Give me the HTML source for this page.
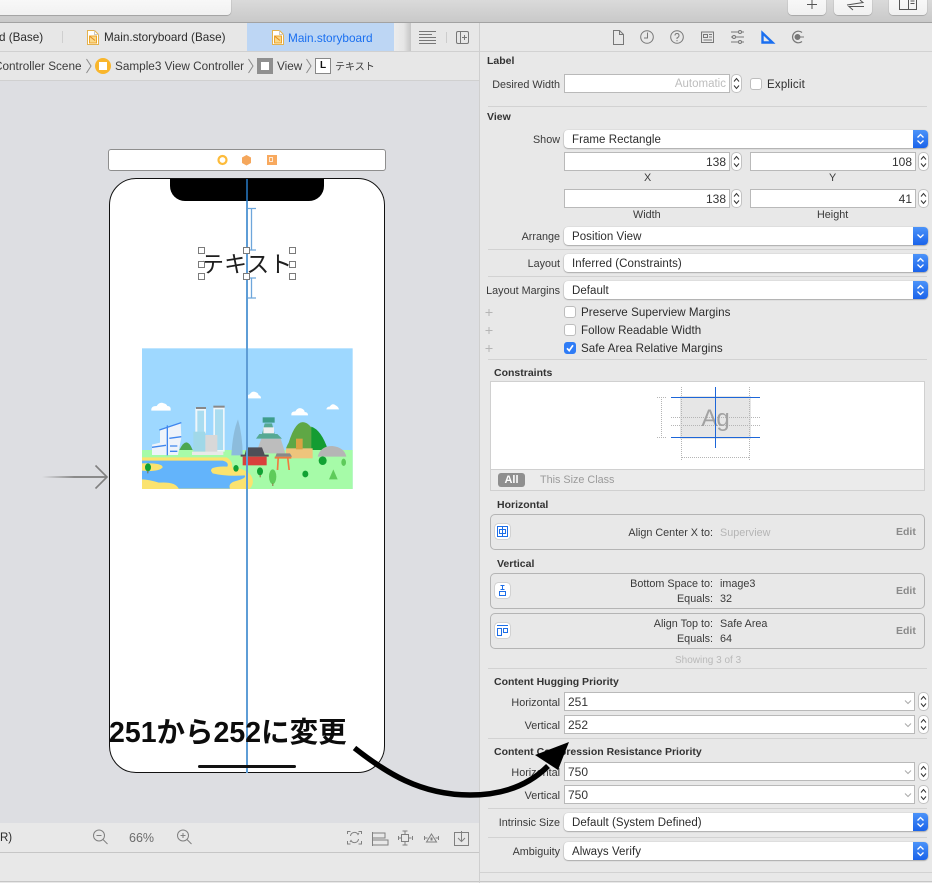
<!DOCTYPE html>
<html><head><meta charset="utf-8">
<style>
html,body{margin:0;padding:0}
body{width:932px;height:883px;overflow:hidden;position:relative;background:#e8e8e8;font-family:"Liberation Sans","Noto Sans CJK JP",sans-serif;font-size:10.8px;color:#2c2c2c;letter-spacing:0}
div,svg{position:absolute}
.t{position:absolute;white-space:nowrap;line-height:14px;height:14px;margin-top:1px}
.l{position:absolute;white-space:nowrap;line-height:14px;height:14px;right:372px;color:#3a3a3a;margin-top:1px}
.b{font-weight:bold;color:#333;font-size:10.5px}
.s{position:absolute;left:488px;width:439px;height:1px;background:#d2d2d2}
.f{box-sizing:border-box;background:#fff;border:1px solid #b9b9b9;line-height:18px;white-space:nowrap;color:#333}
.n{text-align:right;padding-right:3px;font-size:12px}
.c{padding-left:3px;font-size:12px}
.p{left:564px;width:364px;height:18px;background:#fff;border-radius:4px;box-shadow:0 .5px 1.5px rgba(0,0,0,.45);line-height:20px;font-size:11.5px;letter-spacing:.05px;padding-left:8px;box-sizing:border-box;white-space:nowrap;color:#2c2c2c}
.p i{position:absolute;right:0;top:0;width:15px;height:18px;background:linear-gradient(#4b93f9,#1a63ea);border-radius:0 4px 4px 0}
.k{box-sizing:border-box;width:12px;height:12px;background:#fff;border:1px solid #bdbdbd;border-radius:3px}
.h{box-sizing:border-box;width:7px;height:7px;background:#fff;border:1.3px solid #7b7b7b}
.x{box-sizing:border-box;left:490px;width:435px;border:1px solid #b4b4b4;border-radius:5px;background:#e8e8e8}
.ib{box-sizing:border-box;left:495px;width:15px;height:15px;background:#fff;border-radius:3px;box-shadow:0 0 1px rgba(0,0,0,.6)}
.cb{font-size:11.6px;letter-spacing:.05px}
</style></head><body>
<svg width="0" height="0" style="position:absolute"><defs>
<symbol id="st" viewBox="0 0 11 19"><rect x=".5" y=".5" width="10" height="18" rx="4.5" fill="#fff" stroke="#c2c2c2"/><path d="M3 7.500l2.500-3 2.500 3M3 11.500l2.500 3 2.500-3" fill="none" stroke="#333" stroke-width="1"/></symbol>
<symbol id="ud" viewBox="0 0 15 18"><path d="M4.500 7.500L7.500 4.500l3 3M4.500 10.500l3 3 3-3" fill="none" stroke="#fff" stroke-width="1.300"/></symbol>
<symbol id="dc" viewBox="0 0 12 15"><path d="M.5.5h7l4 4v10H.5z" fill="#fff" stroke="#e3b24e"/><path d="M7.500.5v4h4" fill="none" stroke="#c9c9c9"/><rect x="2.500" y="6" width="7" height="7" fill="#f9d98a" stroke="#eda428"/><path d="M3 6.500l5 4" stroke="#e68a1e"/></symbol>
</defs></svg>

<!-- top toolbar -->
<div style="left:0;top:0;width:932px;height:22px;background:linear-gradient(#dadada,#c9c9c9)"></div>
<div style="left:0;top:22px;width:932px;height:1px;background:#a2a2a2"></div>
<div style="left:-5px;top:-5px;width:236px;height:20px;background:linear-gradient(#fafafa,#f1f1f1);border-radius:4px;box-shadow:0 .5px 1px rgba(0,0,0,.4)"></div>
<div style="left:788px;top:-5px;width:38px;height:20px;background:linear-gradient(#fafafa,#f0f0f0);border-radius:4px;box-shadow:0 .5px 1px rgba(0,0,0,.35)"></div>
<div style="left:834px;top:-5px;width:38px;height:20px;background:linear-gradient(#fafafa,#f0f0f0);border-radius:4px;box-shadow:0 .5px 1px rgba(0,0,0,.35)"></div>
<div style="left:889px;top:-5px;width:38px;height:20px;background:linear-gradient(#fafafa,#f0f0f0);border-radius:4px;box-shadow:0 .5px 1px rgba(0,0,0,.35)"></div>
<svg style="left:780px;top:0" width="152" height="15" fill="none" stroke="#555" stroke-width="1">
<path d="M27 4.500h10M32 0v9"/>
<path d="M67 5l16-2.500-3-2.500M84 6.500H69l4 3.500"/>
<path d="M119.500-1v10.500h17V-1M128.500-1v10.500M130.500 1h4M130.500 3.500h4"/>
</svg>

<!-- tabs -->
<div style="left:0;top:23px;width:479px;height:28px;background:#e7e7e7"></div>
<div style="left:247px;top:23px;width:147px;height:28px;background:#bdd6f4"></div>
<div style="left:394px;top:23px;width:16px;height:28px;background:linear-gradient(90deg,#ececec 0,#e6e6e6 60%,#c9c9c9 100%)"></div>
<div style="left:410px;top:23px;width:1px;height:28px;background:#c8c8c8"></div>
<div style="left:62px;top:31px;width:1px;height:12px;background:#cfcfcf"></div>
<span class="t" style="left:-1px;top:30px;font-size:11.700px">d (Base)</span>
<svg style="left:87px;top:30px" width="12" height="15"><use href="#dc"/></svg>
<span class="t" style="left:104px;top:30px;font-size:11.700px">Main.storyboard (Base)</span>
<svg style="left:272px;top:30px" width="12" height="15"><use href="#dc"/></svg>
<span class="t" style="left:288px;top:30px;font-size:11.800px;color:#1a6ff0">Main.storyboard</span>
<svg style="left:415px;top:28px" width="60" height="20" fill="none" stroke="#777">
<path d="M4 3.500h17M4 6.500h13M4 9.500h17M4 12.500h17M4 15.500h17" stroke-width=".9"/>
<path d="M31.500 4v11" stroke="#ccc"/>
<rect x="41.500" y="3.500" width="12" height="12" rx="1.500"/><path d="M45.500 3.500v12M47 9.500h5M49.500 7v5"/>
</svg>
<div style="left:0;top:51px;width:479px;height:1px;background:#d0d0d0"></div>

<!-- breadcrumb -->
<div style="left:0;top:52px;width:479px;height:28px;background:#e7e7e7"></div>
<div style="left:0;top:80px;width:479px;height:1px;background:#d0d0d0"></div>
<span class="t" style="left:-6px;top:59px;font-size:11.750px;color:#3c3c3c">Controller Scene</span>
<svg style="left:85px;top:58px" width="232" height="16" fill="none" stroke="#8a8a8a"><path d="M1.500 1l4.500 7-4.500 7M163.500 1l4.500 7-4.500 7M221.500 1l4.500 7-4.500 7"/></svg>
<div style="left:95px;top:58px;width:16px;height:16px;border-radius:50%;background:#f9b62c"></div>
<div style="left:99px;top:62px;width:8px;height:8px;background:#fff"></div>
<span class="t" style="left:115px;top:59px;font-size:11.750px;color:#3c3c3c">Sample3 View Controller</span>
<div style="left:257px;top:58px;width:16px;height:16px;background:#8f8f8f"></div>
<div style="left:261px;top:62px;width:8px;height:8px;background:#fff"></div>
<span class="t" style="left:277px;top:59px;font-size:11.750px;color:#3c3c3c">View</span>
<div style="left:315px;top:58px;width:16px;height:16px;box-sizing:border-box;border:1px solid #888;background:#fff;text-align:center;font:bold 10px/14px 'Liberation Sans',sans-serif;color:#111">L</div>
<span class="t" style="left:335px;top:60px;font-size:10px;color:#3c3c3c">テキスト</span>

<!-- canvas -->
<div style="left:0;top:81px;width:479px;height:742px;background:#dddee2"></div>
<div style="left:108px;top:149px;width:278px;height:22px;box-sizing:border-box;background:#fff;border:1px solid #8e8e8e;border-radius:3px"></div>
<svg style="left:215px;top:153px" width="65" height="15">
<circle cx="7.500" cy="7" r="4" fill="#fff" stroke="#fdbb3a" stroke-width="2.200"/>
<path d="M31.500 2l4.500 2.500v5.500l-4.500 2.500-4.500-2.500V4.500z" fill="#f5a75c"/>
<rect x="52" y="2" width="10" height="10" fill="#f8a95e"/><path d="M54.500 4.500h3v4h-3z" fill="none" stroke="#fff" stroke-width=".7"/>
</svg>
<div style="left:109px;top:178px;width:276px;height:595px;box-sizing:border-box;background:#fff;border:1px solid #111;border-radius:27px"></div>
<div style="left:170px;top:179px;width:154px;height:22px;background:#000;border-radius:0 0 15px 15px"></div>
<svg style="left:40px;top:460px" width="72" height="34" fill="none"><defs><linearGradient id="g"><stop offset="0" stop-color="#8a8a8a" stop-opacity="0"/><stop offset=".5" stop-color="#8a8a8a"/></linearGradient></defs>
<rect x="2" y="16" width="65" height="2" fill="url(#g)"/><path d="M55.500 5.500L67 17 55.500 28.500" stroke="#808080" stroke-width="1.600"/></svg>

<!-- image illustration; coordinates are zoomed 3x from x130,y340 -->
<svg style="left:130px;top:340px" width="235" height="160" viewBox="0 0 705 480">
<rect x="36" y="25" width="632" height="422" fill="#9ed8ff"/>
<path d="M36 330H668V447H36z" fill="#a6fba8"/>
<path d="M36 352H290q20 12 16 30 50 5 60 30 8 20-8 35H36z" fill="#fbe36f"/>
<path d="M36 362H278q20 5 14 18-25-2-44 4-10 6 0 16 40 10 96 6 8 8-30 18-20 6-14 22H146q-10-22-60-18-30-10-50-10v-26q50 4 62-10 0-14-62-12z" fill="#63b4fb"/>
<g fill="#fff"><path d="M64 212q-2-14 16-14 8-14 22-8 8 2 10 8 12 0 10 14z"/><path d="M484 226q-2-12 12-12 8-14 20-8 8 4 8 10 10 0 10 10z"/><path d="M589 208q2-8 10-8 8-12 18-4 8 4 10 12z"/><path d="M351 175q-2-10 8-12 8-12 20-6 8 4 6 8 8 2 8 10z"/></g>
<path d="M66 345V314l24-6v-40l62-20 2 44-10 53z" fill="#eef3fa"/><path d="M88 270l66-22M112 256v90M66 322l42-6M118 295l36-5M120 318h22M120 334h22" stroke="#3f86ee" stroke-width="4" fill="none"/>
<path d="M148 330q22-46 40 0z" fill="#4ca64f"/>
<rect x="196" y="205" width="32" height="75" fill="#eef6fa"/><rect x="250" y="200" width="34" height="135" fill="#eef6fa"/>
<rect x="202" y="212" width="20" height="66" fill="#a9dcf0"/><rect x="255" y="208" width="24" height="122" fill="#a9dcf0"/>
<rect x="190" y="275" width="36" height="60" fill="#a0d8e8"/><rect x="226" y="285" width="36" height="55" fill="#d8d8d8"/>
<rect x="186" y="335" width="94" height="10" fill="#e9e9e9"/><rect x="198" y="201" width="30" height="6" fill="#888"/><rect x="250" y="197" width="34" height="6" fill="#888"/>
<path d="M304 346q4-70 20-108 14 50 14 108z" fill="#8cbcdc"/>
<path d="M470 330q30-120 74-68 30 25 50 68z" fill="#5fa745"/><path d="M544 260q30 10 50 70h-50z" fill="#149c32"/><path d="M468 325q14-38 36-22v22z" fill="#5fa745"/>
<path d="M378 340l16-44h58l14 44z" fill="#bdbdbd"/><path d="M378 296h78l-14-14h-8l-8-32h-22l-8 32h-8z" fill="#56a993"/><rect x="398" y="232" width="36" height="16" fill="#3e9d8b"/><rect x="400" y="262" width="32" height="18" fill="#eee"/>
<rect x="468" y="325" width="80" height="30" fill="#eec47c"/><rect x="498" y="296" width="20" height="32" fill="#d9a243"/>
<path d="M563 350q8-32 44-32 36 4 42 32z" fill="#b5b5b5"/>
<path d="M350 322h46l8 22h12v6H332v-6h12z" fill="#4f4f57"/><rect x="338" y="350" width="72" height="26" fill="#d9403c"/>
<path d="M434 350h50v6h-8l4 34h-5l-4-34h-24l-2 34h-5l2-34h-8z" fill="#f07b3f"/><path d="M440 340h40l6 10h-50z" fill="#888"/>
<g fill="#11a233"><ellipse cx="54" cy="382" rx="9" ry="12"/><ellipse cx="318" cy="385" rx="8" ry="10"/><ellipse cx="390" cy="394" rx="9" ry="12"/><ellipse cx="526" cy="402" rx="9" ry="10"/><ellipse cx="578" cy="362" rx="12" ry="13"/></g>
<g fill="#5ecb5a"><ellipse cx="428" cy="410" rx="11" ry="22"/><ellipse cx="641" cy="367" rx="7" ry="11"/><path d="M610 388l13 30h-26z"/></g>
<g fill="#8a6b3a"><rect x="52" y="392" width="3" height="8"/><rect x="427" y="430" width="3" height="8"/><rect x="389" y="405" width="3" height="7"/></g>
</svg>

<!-- selection guides -->
<div style="left:246px;top:179px;width:1.500px;height:594px;background:#5e9dd6"></div>
<div style="left:246px;top:179px;width:1.500px;height:22px;background:#1e5c94"></div>
<svg style="left:248px;top:206px" width="10" height="95" fill="none" stroke="#6ea6db" stroke-width="1.300"><path d="M0 2.500h8M3.500 2v42M0 44h8M0 72h8M3.500 72v20M0 92h8"/></svg>
<span class="t" style="left:201px;top:248px;font-size:23px;line-height:30px;height:30px;color:#1e1e1e">テキスト</span>
<div class="h" style="left:198px;top:247px"></div><div class="h" style="left:243px;top:247px"></div><div class="h" style="left:289px;top:247px"></div>
<div class="h" style="left:198px;top:261px"></div><div class="h" style="left:289px;top:261px"></div>
<div class="h" style="left:198px;top:273px"></div><div class="h" style="left:243px;top:273px"></div><div class="h" style="left:289px;top:273px"></div>
<div style="left:198px;top:765px;width:98px;height:3px;background:#111;border-radius:2px"></div>
<span class="t" style="left:109px;top:714px;font-size:28.500px;line-height:36px;height:36px;font-weight:bold;color:#0c0c0c">251から252に変更</span>

<!-- bottom bar -->
<div style="left:0;top:823px;width:479px;height:29px;background:#e8e8e8"></div>
<div style="left:0;top:852px;width:479px;height:1px;background:#c6c6c6"></div>
<div style="left:0;top:881px;width:932px;height:1px;background:#c6c6c6"></div>
<span class="t" style="left:0;top:830px;font-size:11.500px">R)</span>
<span class="t" style="left:129px;top:830px;font-size:12.500px;color:#6c6c6c">66%</span>
<svg style="left:90px;top:826px" width="385" height="22" fill="none" stroke="#808080" stroke-width="1">
<circle cx="9" cy="9.500" r="5.500"/><path d="M13 13.500l4.500 4.500M6.500 9.500h5"/>
<circle cx="93" cy="9.500" r="5.500"/><path d="M97 13.500l4.500 4.500M90.500 9.500h5M93 7v5"/>
<path d="M257.500 8V5.500h3M268.500 5.500h3V8M271.500 15v3h-3M260.500 18h-3v-3"/><path d="M260.500 10a4 4 0 0 1 7.500-1.500l1-1.500M268.500 13a4 4 0 0 1-7.500 1.500l-1 1.500"/>
<path d="M282.500 6v14M283 7h12v5h-12M283 14h15v5h-15"/>
<rect x="311.500" y="8.500" width="7" height="7"/><path d="M315 5v3M312.500 5h5M315 16v3M312.500 19h5M308.500 12h3M308.500 10v4M318.500 12h3M322.500 10v4"/>
<path d="M334.500 10v4M334.500 12h3M348.500 10v4M348.500 12h-3M341.500 8l5 8h-10z"/><path d="M341 12h1v2h-1z"/>
<rect x="364.500" y="6.500" width="14" height="13"/><path d="M371.500 5v10M368 12l3.500 3.500L375 12"/>
</svg>

<!-- inspector -->
<div style="left:479px;top:23px;width:1px;height:860px;background:#cfcfcf"></div>
<svg style="left:600px;top:27px" width="215" height="20" fill="none" stroke="#777" stroke-width="1">
<path d="M13.500 3.500h6l4 4v10h-10zM19.500 3.500v4h4"/>
<circle cx="47" cy="10" r="6.300"/><path d="M47.500 5.500v5.500H44"/>
<circle cx="77" cy="10" r="6.300"/><path d="M75 8.500q0-2 2-2t2 2q0 1.500-2 2.500v1"/><path d="M77 13v1.200"/>
<rect x="101.500" y="5" width="12" height="10.500"/><path d="M103.500 7.500h4v3h-4zM109 7.500h3M109 10h3M103.500 13h8.500"/>
<path d="M131 5h13M131 10h13M131 15h13"/><circle cx="140" cy="5" r="1.500" fill="#e8e8e8"/><circle cx="134" cy="10" r="1.500" fill="#e8e8e8"/><circle cx="140" cy="15" r="1.500" fill="#e8e8e8"/>
<path d="M162.500 6v9.500h10z" stroke="#1a6ff0" stroke-width="2.400"/>
<path d="M202 5.500a5.800 5.800 0 1 0 0 9" stroke-width="1.200"/><circle cx="197.500" cy="10" r="2.500" fill="#777"/><path d="M199 10h5"/>
</svg>
<div style="left:480px;top:51px;width:452px;height:1px;background:#d2d2d2"></div>

<span class="t b" style="left:487px;top:53px">Label</span>
<span class="l" style="top:77px">Desired Width</span>
<div class="f n" style="left:564px;top:74px;width:166px;height:19px;color:#bdbdbd;font-size:11.500px">Automatic</div>
<svg style="left:731px;top:74px" width="11" height="19"><use href="#st"/></svg>
<div class="k" style="left:750px;top:78px"></div>
<span class="t" style="left:767px;top:77px;font-size:11.500px;letter-spacing:.2px">Explicit</span>
<div class="s" style="top:106px"></div>

<span class="t b" style="left:487px;top:109px">View</span>
<span class="l" style="top:132px">Show</span>
<div class="p" style="top:130px">Frame Rectangle<i><svg width="15" height="18"><use href="#ud"/></svg></i></div>
<div class="f n" style="left:564px;top:152px;width:166px;height:19px">138</div>
<svg style="left:731px;top:152px" width="11" height="19"><use href="#st"/></svg>
<div class="f n" style="left:750px;top:152px;width:166px;height:19px">108</div>
<svg style="left:918px;top:152px" width="11" height="19"><use href="#st"/></svg>
<span class="t" style="left:644px;top:170px;color:#3a3a3a">X</span>
<span class="t" style="left:829px;top:170px;color:#3a3a3a">Y</span>
<div class="f n" style="left:564px;top:189px;width:166px;height:19px">138</div>
<svg style="left:731px;top:189px" width="11" height="19"><use href="#st"/></svg>
<div class="f n" style="left:750px;top:189px;width:166px;height:19px">41</div>
<svg style="left:918px;top:189px" width="11" height="19"><use href="#st"/></svg>
<span class="t" style="left:633px;top:207px;color:#3a3a3a">Width</span>
<span class="t" style="left:817px;top:207px;color:#3a3a3a">Height</span>

<span class="l" style="top:229px">Arrange</span>
<div class="p" style="top:227px">Position View<i><svg width="15" height="18"><path d="M4.500 7.500l3 3 3-3" fill="none" stroke="#fff" stroke-width="1.300"/></svg></i></div>
<div class="s" style="top:249px"></div>
<span class="l" style="top:256px">Layout</span>
<div class="p" style="top:254px">Inferred (Constraints)<i><svg width="15" height="18"><use href="#ud"/></svg></i></div>
<div class="s" style="top:276px"></div>
<span class="l" style="top:283px">Layout Margins</span>
<div class="p" style="top:281px">Default<i><svg width="15" height="18"><use href="#ud"/></svg></i></div>

<svg style="left:485px;top:305px" width="10" height="50" fill="none" stroke="#b5b5b5"><path d="M.5 7.500h7M4 4v7M.5 25.500h7M4 22v7M.5 43.500h7M4 40v7"/></svg>
<div class="k" style="left:564px;top:306px"></div><span class="t cb" style="left:581px;top:305px">Preserve Superview Margins</span>
<div class="k" style="left:564px;top:324px"></div><span class="t cb" style="left:581px;top:323px">Follow Readable Width</span>
<div class="k" style="left:564px;top:342px;background:#2f7cf6;border-color:#2f7cf6"></div>
<svg style="left:564px;top:342px" width="12" height="12" fill="none" stroke="#fff" stroke-width="1.700"><path d="M3 6.300l2.200 2.400L9 3.300"/></svg>
<span class="t cb" style="left:581px;top:341px">Safe Area Relative Margins</span>
<div class="s" style="top:359px"></div>

<span class="t b" style="left:494px;top:365px">Constraints</span>
<div style="left:490px;top:381px;width:435px;height:110px;box-sizing:border-box;border:1px solid #d0d0d0;background:#ebebeb"></div>
<div style="left:491px;top:382px;width:433px;height:87px;background:#fff;border-bottom:1px solid #d0d0d0"></div>
<svg style="left:650px;top:385px" width="140" height="80" fill="none">
<rect x="30" y="11" width="71" height="43" fill="#e6e6e6"/>
<g stroke="#b5b5b5" stroke-dasharray="1 1"><path d="M31.500 2v74M99.500 2v74M32 72.500h67M7 12.500h9M7 52.500h9M11.500 12v41M21 32.500h89M21 40.500h89"/></g>
<text x="65" y="41" text-anchor="middle" font-family="Liberation Sans" font-size="24" letter-spacing="-1" fill="#a2a2a2" stroke="none">Ag</text>
<path d="M21 12.500h89M21 52.500h89M65.500 2v61" stroke="#1d66d8"/>
</svg>
<div style="left:498px;top:473px;width:27px;height:14px;background:#8f8f8f;border-radius:3px;color:#fff;text-align:center;font:bold 11px/14px 'Liberation Sans',sans-serif">All</div>
<span class="t" style="left:540px;top:472px;color:#9b9b9b">This Size Class</span>

<span class="t b" style="left:497px;top:497px">Horizontal</span>
<div class="x" style="top:514px;height:36px"></div>
<div class="ib" style="top:524px"></div>
<svg style="left:495px;top:524px" width="15" height="15" fill="none" stroke="#1d6ee8"><rect x="2.500" y="2.500" width="10" height="10"/><rect x="4.500" y="5.500" width="6" height="4"/><path d="M7.500 2v11"/></svg>
<span class="t" style="right:219px;top:525px;color:#3a3a3a">Align Center X to:</span>
<span class="t" style="left:720px;top:525px;color:#b5b5b5">Superview</span>
<span class="t" style="left:896px;top:524px;font-weight:bold;color:#8a8a8a;font-size:10.500px">Edit</span>

<span class="t b" style="left:497px;top:556px">Vertical</span>
<div class="x" style="top:573px;height:36px"></div>
<div class="ib" style="top:583px"></div>
<svg style="left:495px;top:583px" width="15" height="15" fill="none" stroke="#1d6ee8"><rect x="4.500" y="8.500" width="6" height="4"/><path d="M5.500 2.500h4M7.500 2.500v4M5.500 6.500h4"/></svg>
<span class="t" style="right:219px;top:576px;color:#3a3a3a">Bottom Space to:</span>
<span class="t" style="left:720px;top:576px;color:#3a3a3a">image3</span>
<span class="t" style="right:219px;top:591px;color:#3a3a3a">Equals:</span>
<span class="t" style="left:720px;top:591px;color:#3a3a3a">32</span>
<span class="t" style="left:896px;top:583px;font-weight:bold;color:#8a8a8a;font-size:10.500px">Edit</span>

<div class="x" style="top:613px;height:36px"></div>
<div class="ib" style="top:623px"></div>
<svg style="left:495px;top:623px" width="15" height="15" fill="none" stroke="#1d6ee8"><path d="M2 2.500h11"/><rect x="2.500" y="5.500" width="4" height="7"/><rect x="8.500" y="5.500" width="4" height="4"/></svg>
<span class="t" style="right:219px;top:616px;color:#3a3a3a">Align Top to:</span>
<span class="t" style="left:720px;top:616px;color:#3a3a3a">Safe Area</span>
<span class="t" style="right:219px;top:631px;color:#3a3a3a">Equals:</span>
<span class="t" style="left:720px;top:631px;color:#3a3a3a">64</span>
<span class="t" style="left:896px;top:623px;font-weight:bold;color:#8a8a8a;font-size:10.500px">Edit</span>
<span class="t" style="left:675px;top:653px;color:#b9b9b9;font-size:10px">Showing 3 of 3</span>
<div class="s" style="top:668px"></div>

<span class="t b" style="left:494px;top:674px">Content Hugging Priority</span>
<span class="l" style="top:695px">Horizontal</span>
<div class="f c" style="left:564px;top:692px;width:351px;height:19px">251</div>
<svg style="left:918px;top:692px" width="11" height="19"><use href="#st"/></svg>
<span class="l" style="top:718px">Vertical</span>
<div class="f c" style="left:564px;top:715px;width:351px;height:19px">252</div>
<svg style="left:918px;top:715px" width="11" height="19"><use href="#st"/></svg>
<div class="s" style="top:738px"></div>

<span class="t b" style="left:494px;top:744px">Content Compression Resistance Priority</span>
<span class="l" style="top:765px">Horizontal</span>
<div class="f c" style="left:564px;top:762px;width:351px;height:19px">750</div>
<svg style="left:918px;top:762px" width="11" height="19"><use href="#st"/></svg>
<span class="l" style="top:788px">Vertical</span>
<div class="f c" style="left:564px;top:785px;width:351px;height:19px">750</div>
<svg style="left:918px;top:785px" width="11" height="19"><use href="#st"/></svg>
<svg style="left:902px;top:696px" width="12" height="110" fill="none" stroke="#aaa"><path d="M3 4.500l3 3 3-3M3 27.500l3 3 3-3M3 74.500l3 3 3-3M3 97.500l3 3 3-3"/></svg>
<div class="s" style="top:808px"></div>
<span class="l" style="top:815px">Intrinsic Size</span>
<div class="p" style="top:813px">Default (System Defined)<i><svg width="15" height="18"><use href="#ud"/></svg></i></div>
<div class="s" style="top:837px"></div>
<span class="l" style="top:844px">Ambiguity</span>
<div class="p" style="top:842px">Always Verify<i><svg width="15" height="18"><use href="#ud"/></svg></i></div>
<div style="left:480px;top:872px;width:452px;height:1px;background:#d2d2d2"></div>

<!-- big annotation arrow -->
<svg style="left:340px;top:730px" width="240" height="80" fill="none">
<path d="M14.500 18C45 42 80 65 130 65C165 65 190 54 208 36" stroke="#000" stroke-width="5.500"/>
<path d="M229 12L195 25L218 40z" fill="#000"/>
</svg>
</body></html>
